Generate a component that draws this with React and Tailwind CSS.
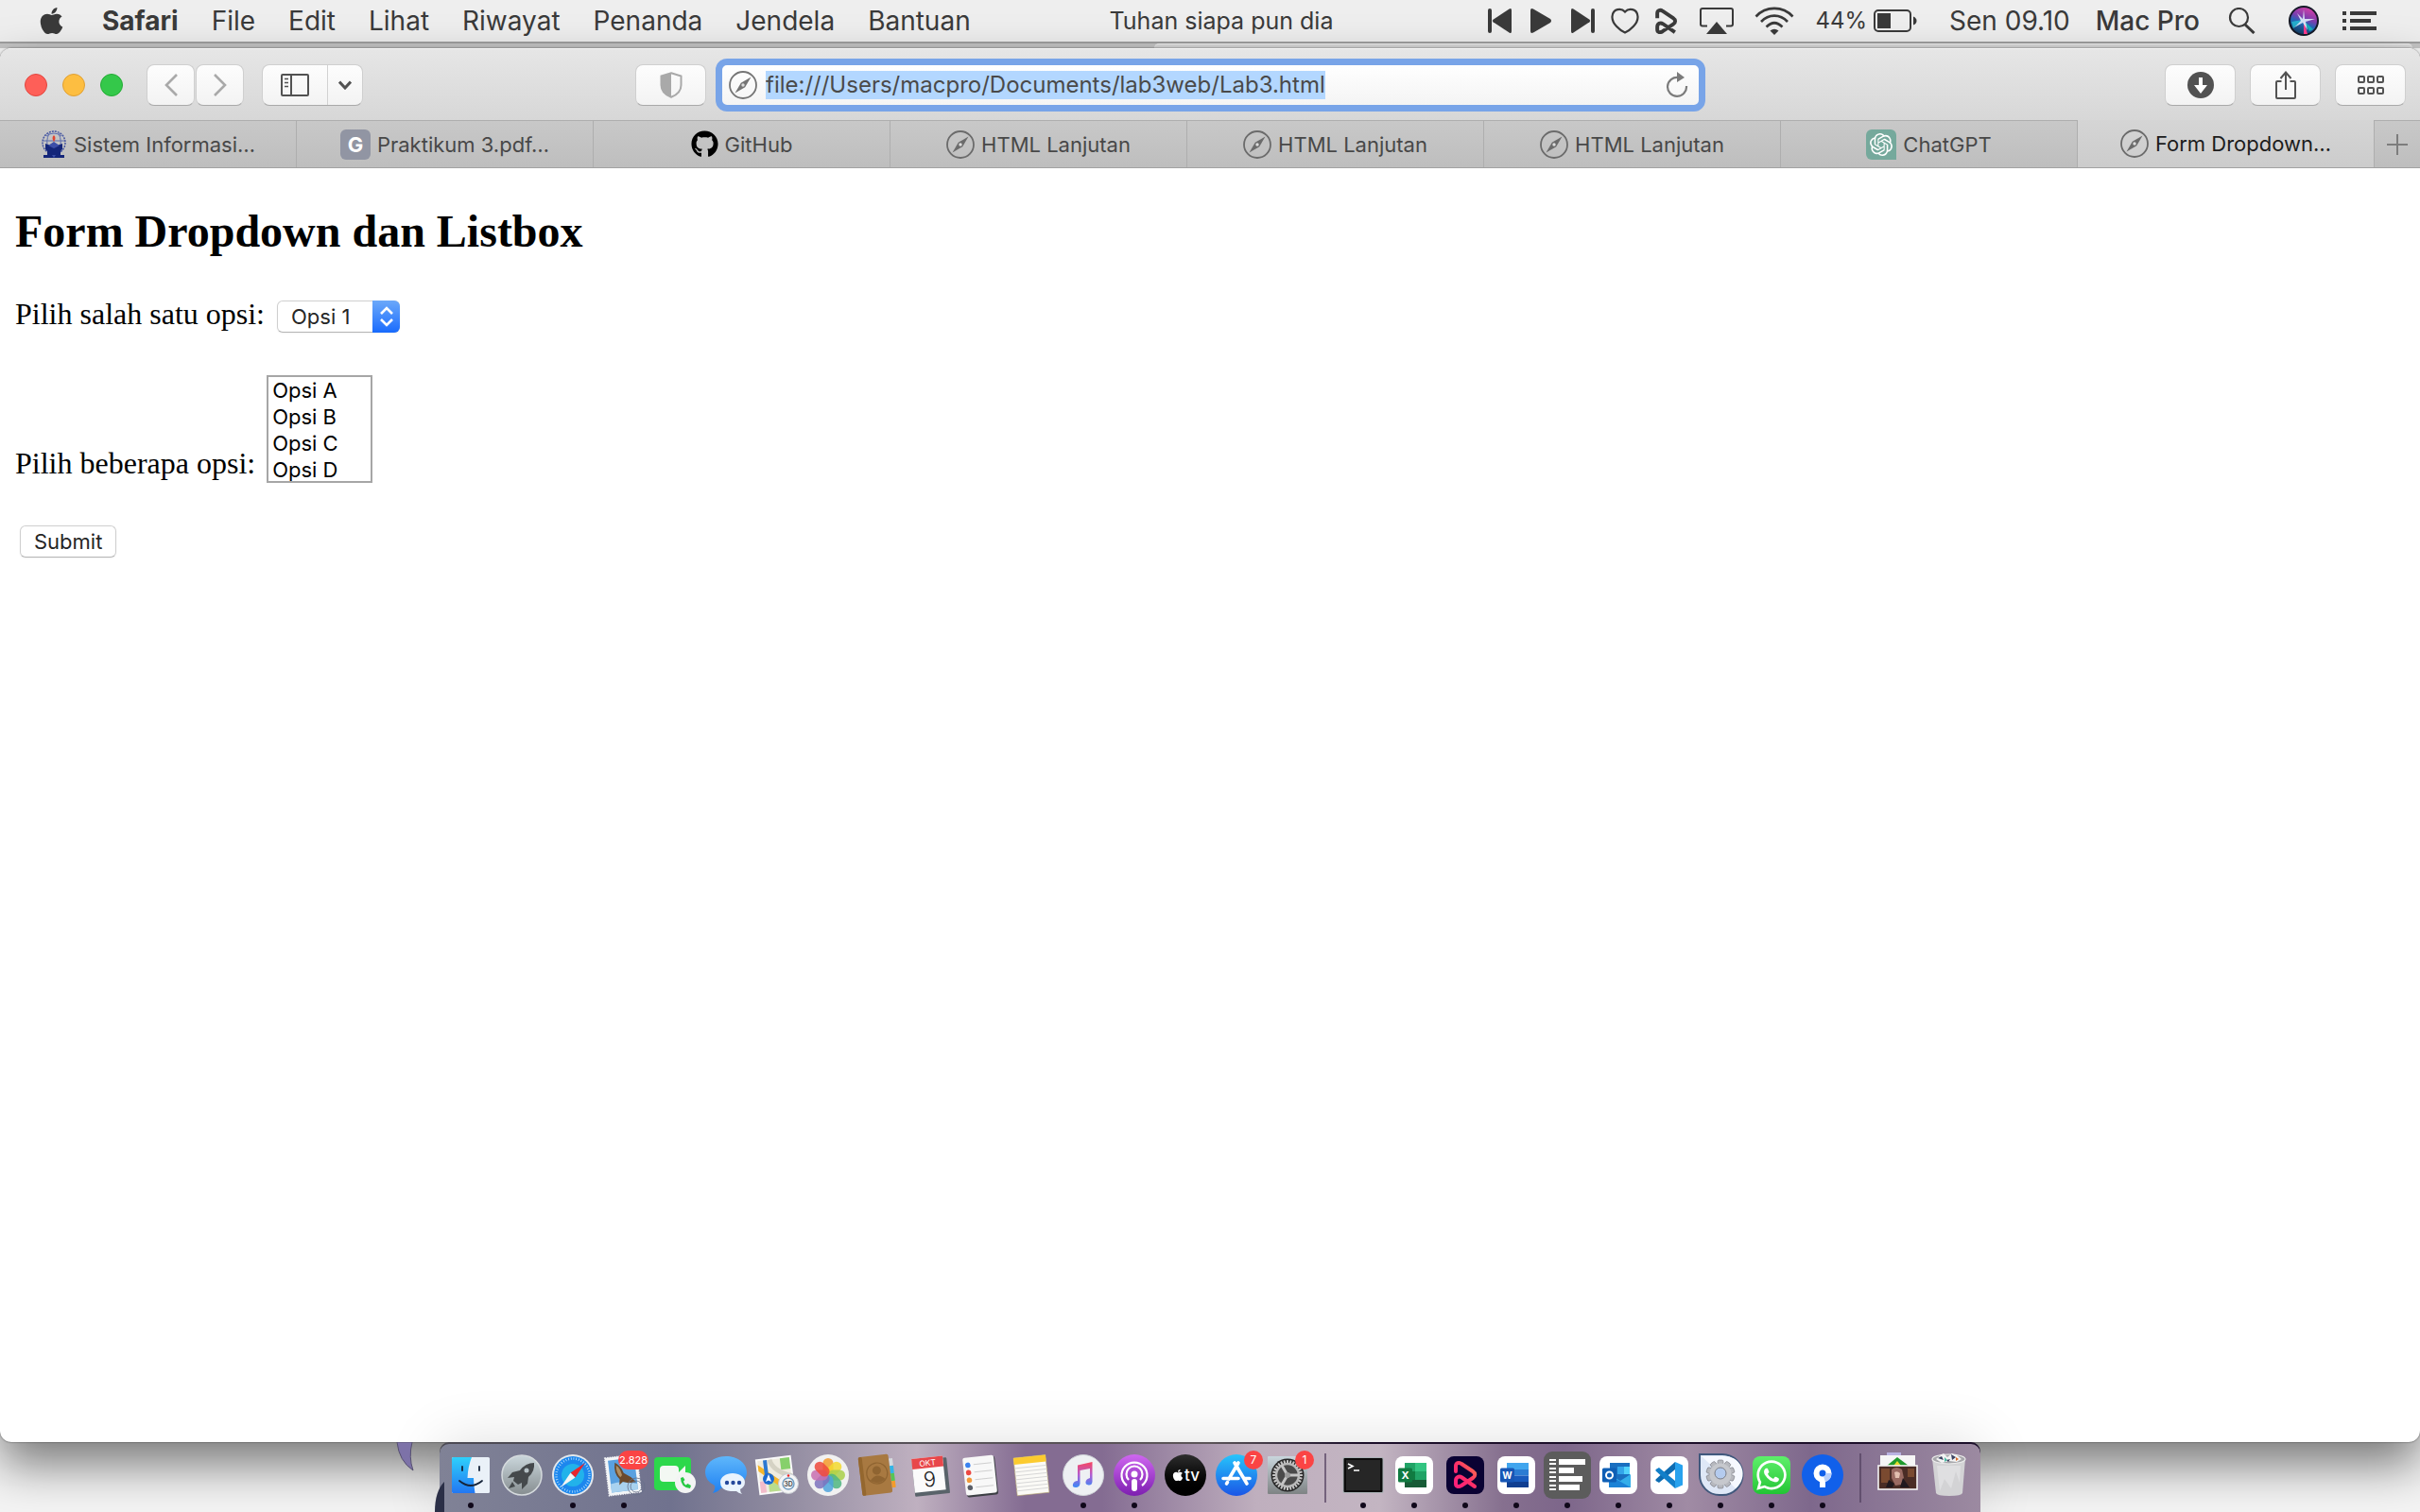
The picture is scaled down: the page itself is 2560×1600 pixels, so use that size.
import React from "react";
import { FaApple, FaGithub, FaWhatsapp } from "react-icons/fa";
import { SiOpenai } from "react-icons/si";

const MENUS = ["File", "Edit", "Lihat", "Riwayat", "Penanda", "Jendela", "Bantuan"];

const RESSO_PATH = "M3 12V6.500C3 3 6.500 2 9 4L21 12C24 14 24 17 21 19L9 27C5.500 29 3 28 3 25V22C3 18 6.500 16.500 9.500 18.500L23 28";

function Compass({ className = "size-[30px]", color = "#6b6b6b" }) {
  return (
    <svg viewBox="0 0 30 30" className={className} fill="none" aria-hidden="true">
      <circle cx="15" cy="15" r="14" stroke={color} strokeWidth="1.800" />
      <path d="M23.500 6.500 17.200 17.200 6.500 23.500 12.800 12.800Z" fill={color} />
      <circle cx="15" cy="15" r="1.700" fill="#ddd" />
    </svg>
  );
}

function MenuBar() {
  return (
    <header className="flex h-[46px] shrink-0 items-center border-b-2 border-[#9f9f9f] bg-[#eeeeee] text-[28px] leading-8 text-[#3a3a3a]">
      <nav className="flex items-center gap-[35px] pl-10" aria-label="Menu">
        <button aria-label="Apple" className="mr-1">
          <FaApple className="h-8 w-[29px]" />
        </button>
        <button className="font-bold">Safari</button>
        {MENUS.map((m) => (
          <button key={m}>{m}</button>
        ))}
      </nav>
      <div className="ml-auto flex items-center pr-[46px]">
        <span className="mr-[164px] text-[25px]">Tuhan siapa pun dia</span>
        <button aria-label="Sebelumnya" className="mr-[20px]">
          <svg viewBox="0 0 25 28" className="h-7 w-[25px]" fill="currentColor">
            <rect x="0" y="1" width="4" height="26" rx="2" />
            <path d="M22.500 1.500Q25 0 25 3V25Q25 28 22.500 26.500L5.500 15.300Q4 14 5.500 12.700Z" />
          </svg>
        </button>
        <button aria-label="Putar" className="mr-[20px]">
          <svg viewBox="0 0 23 28" className="h-7 w-[23px]" fill="currentColor">
            <path d="M3 1.400Q0 0 0 3V25Q0 28 3 26.600L21 16Q23 14 21 12Z" />
          </svg>
        </button>
        <button aria-label="Berikutnya" className="mr-[17px]">
          <svg viewBox="0 0 25 28" className="h-7 w-[25px]" fill="currentColor">
            <rect x="21" y="1" width="4" height="26" rx="2" />
            <path d="M2.500 1.500Q0 0 0 3V25Q0 28 2.500 26.500L19.500 15.300Q21 14 19.500 12.700Z" />
          </svg>
        </button>
        <button aria-label="Suka" className="mr-[16px]">
          <svg viewBox="0 0 30 28" className="h-7 w-[30px]" fill="none" stroke="currentColor" strokeWidth="2.200">
            <path d="M15 4.500C11 0 2 1 1.500 9.500 1 17 10 24.500 15 26.500 20 24.500 29 17 28.500 9.500 28 1 19 0 15 4.500Z" />
          </svg>
        </button>
        <button aria-label="Resso" className="mr-[23px]">
          <svg viewBox="0 0 26 30" className="h-7 w-[25px]" fill="none" stroke="currentColor" strokeWidth="4.200" strokeLinejoin="round">
            <path d={RESSO_PATH} />
          </svg>
        </button>
        <button aria-label="AirPlay" className="mr-[22px]">
          <svg viewBox="0 0 36 28" className="h-7 w-[36px]" fill="none" stroke="currentColor" strokeWidth="2">
            <path d="M8 19.500H3Q1 19.500 1 17.500V3Q1 1 3 1H33Q35 1 35 3V17.500Q35 19.500 33 19.500H28" />
            <path d="M18 15 29 28H7Z" fill="currentColor" stroke="none" />
          </svg>
        </button>
        <button aria-label="Wi-Fi" className="mr-[22px]">
          <svg viewBox="0 0 42 30" className="h-[30px] w-[42px]" fill="none" stroke="currentColor" strokeWidth="2.600">
            <path d="M1.500 10.500C12-1 30-1 40.500 10.500M7 16C15 7.500 27 7.500 35 16M12.500 21.500C18 16 24 16 29.500 21.500" />
            <path d="M16.500 25.500Q21 22 25.500 25.500L21 30Z" fill="currentColor" stroke="none" />
          </svg>
        </button>
        <span className="mr-[7px] text-2xl leading-8">44%</span>
        <svg viewBox="0 0 46 26" className="mr-[34px] h-[26px] w-[46px]" fill="none">
          <rect x="1" y="2" width="38" height="22" rx="4" stroke="#3a3a3a" strokeWidth="2" />
          <rect x="4" y="5" width="14" height="16" fill="#3a3a3a" />
          <path d="M42 8.500Q45.500 10 45.500 13T42 17.500Z" fill="#3a3a3a" />
        </svg>
        <span className="mr-[27px]">Sen 09.10</span>
        <span className="mr-[30px] font-medium">Mac Pro</span>
        <button aria-label="Cari" className="mr-[35px]">
          <svg viewBox="0 0 29 28" className="h-7 w-[29px]" fill="none" stroke="currentColor">
            <circle cx="11.500" cy="10.500" r="9.500" strokeWidth="2.200" />
            <path d="M18 18 27.500 27" strokeWidth="3" />
          </svg>
        </button>
        <button aria-label="Siri" className="mr-[25px]">
          <svg viewBox="0 0 32 32" className="size-8">
            <defs>
              <linearGradient id="siriBall" x1="0.700" y1="0" x2="0.300" y2="1">
                <stop offset="0" stopColor="#d43fa6" />
                <stop offset="0.400" stopColor="#7b3fb0" />
                <stop offset="0.600" stopColor="#2368b8" />
                <stop offset="1" stopColor="#123a5e" />
              </linearGradient>
            </defs>
            <circle cx="16" cy="16" r="16" fill="#131826" />
            <circle cx="16" cy="16" r="14" fill="url(#siriBall)" />
            <path d="M15 15 3 17 5 24Z" fill="#27c1d6" opacity="0.800" />
            <path d="M16 16 20 30 16 30Z" fill="#ff3a8c" />
            <path d="M16 16 26 25 22 27Z" fill="#12d0c0" opacity="0.700" />
            <path d="M16 4 17 14 28 14 18 17 20 26 15 18 6 23 13 16 9 8 15 14Z" fill="#e8f6ff" opacity="0.850" />
          </svg>
        </button>
        <button aria-label="Pusat Pemberitahuan">
          <svg viewBox="0 0 36 20" className="h-5 w-9" fill="currentColor">
            <path d="M0 0h4v4H0zM0 8h4v4H0zM0 16h4v4H0zM8 0h28v4H8zM8 8h22v4H8zM8 16h28v4H8z" />
          </svg>
        </button>
      </div>
    </header>
  );
}

const BTN =
  "flex h-11 items-center justify-center rounded-lg border border-[#cfcfcf] border-b-[#a9a9a9] bg-linear-to-b from-[#fdfdfd] to-[#f3f3f3] text-[#525252]";

function Toolbar() {
  return (
    <div className="flex h-[75px] items-center px-[15px]">
      <div className="flex gap-4 pl-[11px]">
        <button aria-label="Tutup" className="size-6 rounded-full border border-[#e2463f] bg-[#fe5f58]" />
        <button aria-label="Kecilkan" className="size-6 rounded-full border border-[#e0a033] bg-[#fdbe41]" />
        <button aria-label="Besarkan" className="size-6 rounded-full border border-[#24ac35] bg-[#34c84a]" />
      </div>
      <div className="ml-[25px] flex gap-px">
        <button aria-label="Kembali" className={BTN + " w-[51px]"}>
          <svg viewBox="0 0 14 24" className="h-6 w-3.5" fill="none" stroke="#a9a9a9" strokeWidth="2.600">
            <path d="M13 1 2 12 13 23" />
          </svg>
        </button>
        <button aria-label="Maju" className={BTN + " w-[51px]"}>
          <svg viewBox="0 0 14 24" className="h-6 w-3.5" fill="none" stroke="#a9a9a9" strokeWidth="2.600">
            <path d="M1 1 12 12 1 23" />
          </svg>
        </button>
      </div>
      <div className={BTN + " ml-[19px]"}>
        <button aria-label="Bar samping" className="flex h-full w-[69px] items-center justify-center border-r border-[#d2d2d2]">
          <svg viewBox="0 0 30 24" className="h-6 w-[30px]" fill="none" stroke="currentColor" strokeWidth="2">
            <rect x="1" y="1" width="28" height="22" rx="1" />
            <path d="M11 1V23" />
            <path d="M4 5.500H8M4 9.500H8M4 13.500H8" strokeWidth="1.600" />
          </svg>
        </button>
        <button aria-label="Grup tab" className="flex h-full w-[36px] items-center justify-center">
          <svg viewBox="0 0 14 10" className="h-2.5 w-3.5" fill="none" stroke="currentColor" strokeWidth="3">
            <path d="M1 1.500 7 8 13 1.500" />
          </svg>
        </button>
      </div>
      <button aria-label="Laporan privasi" className={BTN + " mr-[10px] ml-[288px] w-[75px]"}>
        <svg viewBox="0 0 24 28" className="h-7 w-6">
          <path d="M12 1.200 22.500 4.500V14C22.500 20 18 24.500 12 26.800 6 24.500 1.500 20 1.500 14V4.500Z" fill="none" stroke="#a9a9a9" strokeWidth="2" />
          <path d="M12 1V27C6 24.500 1.500 20 1.500 14V4.500Z" fill="#a9a9a9" />
        </svg>
      </button>
      <label className="flex h-14 min-w-0 flex-1 items-center rounded-xl border-[7px] border-[#78a4e8] bg-linear-to-b from-white to-[#f4f4f4] pr-[11px] pl-[7px]">
        <Compass color="#757575" />
        <input
          aria-label="Alamat"
          defaultValue="file:///Users/macpro/Documents/lab3web/Lab3.html"
          className="ml-[9px] field-sizing-content h-[30px] bg-[#b3d7ff] text-2xl leading-[30px] text-[#4a4a4a] outline-none"
        />
        <button aria-label="Muat ulang" className="ml-auto">
          <svg viewBox="0 0 24 28" className="h-7 w-6" fill="none" stroke="#7b7b7b" strokeWidth="2.200">
            <path d="M13.500 6A10 10 0 1 0 22 15" />
            <path d="M12 0 20 6 12 11Z" fill="#7b7b7b" stroke="none" />
          </svg>
        </button>
      </label>
      <div className="ml-[486px] flex gap-[15px]">
        <button aria-label="Unduhan" className={BTN + " w-[75px]"}>
          <svg viewBox="0 0 28 28" className="size-7">
            <circle cx="14" cy="14" r="14" fill="#525252" />
            <path d="M12 6H16V14H21L14 23 7 14H12Z" fill="#fff" />
          </svg>
        </button>
        <button aria-label="Bagikan" className={BTN + " w-[75px]"}>
          <svg viewBox="0 0 24 30" className="h-[30px] w-6" fill="none" stroke="currentColor" strokeWidth="2">
            <path d="M7.500 11H3Q2 11 2 12V28Q2 29 3 29H21Q22 29 22 28V12Q22 11 21 11H16.500M12 20V2M6.500 8 12 1.500 17.500 8" />
          </svg>
        </button>
        <button aria-label="Ikhtisar tab" className={BTN + " w-[75px]"}>
          <svg viewBox="0 0 28 20" className="h-5 w-7" fill="none" stroke="currentColor" strokeWidth="2">
            {[1, 11, 21].map((x) => (
              <g key={x}>
                <rect x={x} y="1" width="6" height="6" rx="1" />
                <rect x={x} y="13" width="6" height="6" rx="1" />
              </g>
            ))}
          </svg>
        </button>
      </div>
    </div>
  );
}

function CampusLogo() {
  return (
    <svg viewBox="0 0 28 30" className="h-[30px] w-7" fill="none" aria-hidden="true">
      <ellipse cx="14" cy="13" rx="12" ry="12" stroke="#4454a0" strokeWidth="1.500" strokeDasharray="2 1" />
      <path d="M6 6Q14 0 22 6M3 11H25M9 3Q5 12 8 18M19 3Q23 12 20 18" stroke="#5b6cae" />
      <path d="M14 5Q17 8 14 12 11 8 14 5Z" fill="#e2452f" />
      <path d="M5 14 14 17 23 14V20L21 22V26H25V29H3V26H7V22L5 20Z" fill="#14267a" />
      <path d="M8 16 14 12 20 16 14 19ZM12 26H16L14 29Z" fill="#3c4fa8" />
    </svg>
  );
}

const TABS = [
  { title: "Sistem Informasi…", icon: <CampusLogo /> },
  {
    title: "Praktikum 3.pdf…",
    icon: (
      <span className="flex size-8 items-center justify-center rounded-md bg-[#9195a3] text-[22px] leading-none font-bold text-white">
        G
      </span>
    ),
  },
  { title: "GitHub", icon: <FaGithub className="size-[29px] text-black" /> },
  { title: "HTML Lanjutan", icon: <Compass /> },
  { title: "HTML Lanjutan", icon: <Compass /> },
  { title: "HTML Lanjutan", icon: <Compass /> },
  {
    title: "ChatGPT",
    icon: (
      <span className="flex size-8 items-center justify-center rounded-md rounded-br-none bg-[#75a99c]">
        <SiOpenai className="size-6 text-white" />
      </span>
    ),
  },
  { title: "Form Dropdown…", icon: <Compass />, active: true },
];

function TabBar() {
  return (
    <div className="flex h-[51px] border-b border-[#a2a2a2] text-[22px] leading-7" role="tablist">
      {TABS.map((t, i) => (
        <button
          key={i}
          role="tab"
          aria-selected={!!t.active}
          className={
            "flex min-w-0 flex-1 items-center justify-center gap-[7px] border-r border-[#aeaeae] " +
            (t.active
              ? "bg-linear-to-b from-[#d5d5d5] to-[#cccccc] text-[#1c1c1c]"
              : "border-t bg-linear-to-b from-[#c8c8c8] to-[#bebebe] text-[#484848]")
          }
        >
          {t.icon}
          <span className="truncate">{t.title}</span>
        </button>
      ))}
      <button
        aria-label="Tab baru"
        className="flex w-[48px] items-center justify-center border-t border-[#aeaeae] bg-linear-to-b from-[#c8c8c8] to-[#bebebe]"
      >
        <svg viewBox="0 0 22 22" className="size-[22px]" stroke="#7d7d7d" strokeWidth="2">
          <path d="M11 0V22M0 11H22" />
        </svg>
      </button>
    </div>
  );
}

function Page() {
  return (
    <main className="px-4 pt-10 text-black">
      <h2 className="font-['Liberation_Serif',serif] text-5xl leading-[54px] font-bold">Form Dropdown dan Listbox</h2>
      <form className="mt-[42px]" onSubmit={(e) => e.preventDefault()}>
        <div className="flex items-start">
          <label htmlFor="opsi" className="font-['Liberation_Serif',serif] text-[32px] leading-[37px]">
            Pilih salah satu opsi:
          </label>
          <div className="relative mt-1 ml-[13px]">
            <select
              id="opsi"
              className="block h-[34px] w-[130px] appearance-none rounded-md border border-[#cfcfcf] border-b-[#b5b5b5] bg-white pl-[14px] text-[22px] leading-8 text-[#262626] shadow-xs"
            >
              <option>Opsi 1</option>
              <option>Opsi 2</option>
              <option>Opsi 3</option>
            </select>
            <span className="pointer-events-none absolute top-0 right-0 flex h-[34px] w-[29px] items-center justify-center rounded-r-md bg-linear-to-b from-[#6ba8f9] to-[#176afd]">
              <svg viewBox="0 0 14 22" className="h-[22px] w-3.5" fill="none" stroke="#fff" strokeWidth="2.600">
                <path d="M1 8 7 2 13 8M1 14 7 20 13 14" />
              </svg>
            </span>
          </div>
        </div>
        <div className="mt-[45px] flex items-end">
          <label htmlFor="beberapa" className="mb-0.5 font-['Liberation_Serif',serif] text-[32px] leading-[37px]">
            Pilih beberapa opsi:
          </label>
          <select
            id="beberapa"
            multiple
            size={4}
            className="ml-3 h-[114px] w-[112px] appearance-none overflow-hidden border-2 border-[#a6a6a6] bg-white pt-px text-[22px] leading-7"
          >
            {["Opsi A", "Opsi B", "Opsi C", "Opsi D"].map((o) => (
              <option key={o} className="h-7 px-1 py-0 leading-7">
                {o}
              </option>
            ))}
          </select>
        </div>
        <button
          type="submit"
          className="mt-[45px] ml-[5px] h-[34px] rounded-md border border-[#cfcfcf] border-b-[#b5b5b5] bg-white px-[14px] text-[22px] leading-8 text-[#262626] shadow-xs"
        >
          Submit
        </button>
      </form>
    </main>
  );
}

function Badge({ children, wide }) {
  return (
    <span
      className={
        "absolute -top-1 flex h-5 items-center justify-center rounded-full bg-[#fb4444] text-white " +
        (wide ? "-right-1 w-8 text-[11px]" : "-right-1.5 w-5 text-xs")
      }
    >
      {children}
    </span>
  );
}

function Svg({ children }) {
  return (
    <svg viewBox="0 0 44 44" className="size-11 overflow-visible" aria-hidden="true">
      {children}
    </svg>
  );
}

const gear = (cx, cy, r, n) =>
  Array.from({ length: n }, (_, i) => (
    <rect key={i} x={cx - 1} y={cy - r - 2} width="2" height="5" rx="0.500" transform={`rotate(${(360 / n) * i} ${cx} ${cy})`} />
  ));

const PETALS = ["#f49b2c", "#f3d92e", "#a9d04a", "#4fb680", "#4fa3dc", "#7d72bd", "#c86fb0", "#ee4a3c"];

const APPS = [
  {
    name: "Finder",
    dot: true,
    art: (
      <Svg>
        <defs>
          <linearGradient id="finder" x2="0" y2="1">
            <stop stopColor="#2ed0fb" />
            <stop offset="1" stopColor="#2277f2" />
          </linearGradient>
        </defs>
        <rect x="2" y="3" width="40" height="38" rx="1.500" fill="#eaf1f8" />
        <path d="M3.500 3H23Q19 13 18.500 25H25Q25 33 26.500 41H3.500Q2 41 2 39.500V4.500Q2 3 3.500 3Z" fill="url(#finder)" />
        <path d="M13 13V17M31 13V17M10 28Q22 38 34 28" fill="none" stroke="#16243a" strokeWidth="1.800" strokeLinecap="round" />
      </Svg>
    ),
  },
  {
    name: "Launchpad",
    art: (
      <Svg>
        <defs>
          <linearGradient id="launch" x2="0" y2="1">
            <stop stopColor="#cbd7dc" />
            <stop offset="1" stopColor="#868d90" />
          </linearGradient>
        </defs>
        <circle cx="22" cy="22" r="21" fill="url(#launch)" stroke="#d5dadd" strokeWidth="1.500" />
        <path d="M35 9Q26 9 20 17L12 19 7 25 14 24 13 28 18 32 22 30 22 37 28 31 29 24Q36 18 35 9Z" fill="#45494c" />
        <path d="M12 29 8 36 15 34Z" fill="#45494c" />
        <circle cx="27" cy="17" r="2.500" fill="#b5c0c5" />
      </Svg>
    ),
  },
  {
    name: "Safari",
    dot: true,
    art: (
      <Svg>
        <circle cx="22" cy="22" r="22" fill="#e4e8ec" />
        <circle cx="22" cy="22" r="20" fill="#1c87ee" />
        <circle cx="22" cy="22" r="12" fill="#22b2ea" />
        <circle cx="22" cy="22" r="17.500" fill="none" stroke="#b9defa" strokeWidth="2.500" strokeDasharray="0.800 1.950" />
        <path d="M35 9 24.500 24.500 19.500 19.500Z" fill="#e8262d" />
        <path d="M9 35 19.500 19.500 24.500 24.500Z" fill="#f4f4f4" />
      </Svg>
    ),
  },
  {
    name: "Mail",
    dot: true,
    badge: "2.828",
    wide: true,
    art: (
      <Svg>
        <g transform="rotate(-7 20 22)">
          <rect x="4" y="2" width="34" height="40" fill="#f3f5f7" stroke="#f3f5f7" strokeWidth="1.500" strokeDasharray="1.500 1" />
          <rect x="7" y="5" width="28" height="34" fill="#5aa1e0" />
          <path d="M7 30Q20 27 35 33V39H7Z" fill="#a9d2ef" />
          <path d="M14 8Q20 12 22 20L29 25 34 31 26 31 20 29 16 32 17 26Q11 19 14 8Z" fill="#6b4a2c" />
          <path d="M15 11Q19 14 20 22L18 24Q14 19 15 11Z" fill="#b08f63" />
        </g>
        <circle cx="35" cy="34" r="9" fill="none" stroke="#66708a" strokeWidth="1" opacity="0.800" />
        <circle cx="35" cy="34" r="6" fill="none" stroke="#66708a" strokeWidth="1" opacity="0.800" />
      </Svg>
    ),
  },
  {
    name: "FaceTime",
    art: (
      <Svg>
        <rect x="0" y="3" width="39" height="35" rx="4" fill="#2cd84b" />
        <rect x="6" y="12" width="20" height="17" rx="4" fill="#f3f8f3" />
        <path d="M26 19 33 12V28L26 22Z" fill="#f3f8f3" />
        <circle cx="33" cy="30" r="11" fill="#f3f4f4" />
        <path d="M28 25Q28 35 38 36L39 33 35.500 31 33.500 32.500Q31.500 31 31 28.500L32.500 27 30.500 24Z" fill="#27c944" />
      </Svg>
    ),
  },
  {
    name: "Pesan",
    art: (
      <Svg>
        <defs>
          <linearGradient id="msg" x2="0" y2="1">
            <stop stopColor="#5fb7fb" />
            <stop offset="1" stopColor="#1e80f2" />
          </linearGradient>
        </defs>
        <path d="M22 2C34 2 44 9 44 19S34 36 22 36Q19 36 17 35.500 13 40 8 41 11 37 10 33 0 28 0 19C0 9 10 2 22 2Z" fill="url(#msg)" />
        <path d="M29 20C36 20 42 24 42 29.500Q42 34 37 37 37 40 39 42 35 41 33 39 16 40 16 29.500C16 24 22 20 29 20Z" fill="#e9f3fd" />
        <circle cx="23" cy="30" r="2.200" fill="#24489c" />
        <circle cx="29.500" cy="30" r="2.200" fill="#24489c" />
        <circle cx="36" cy="30" r="2.200" fill="#24489c" />
      </Svg>
    ),
  },
  {
    name: "Peta",
    art: (
      <Svg>
        <g transform="rotate(-7 20 22)">
          <rect x="2" y="4" width="36" height="36" fill="#efece0" stroke="#fafafa" strokeWidth="2" />
          <rect x="27" y="5" width="10" height="12" fill="#86d06b" />
          <rect x="12" y="28" width="12" height="11" fill="#b9dd8e" />
          <rect x="3" y="27" width="6" height="12" fill="#f3bccb" />
          <path d="M3 16 23 34 27 30 3 9Z" fill="#f5b62b" />
          <path d="M16 5Q18 18 38 25" fill="none" stroke="#d5d2c4" strokeWidth="5" />
          <rect x="9" y="5" width="4" height="20" fill="#2b78d2" />
        </g>
        <circle cx="13" cy="26" r="6" fill="#1c6ad0" />
        <path d="M13 21 16 29 13 27.500 10 29Z" fill="#fff" />
        <circle cx="34" cy="31" r="10.500" fill="#f4f5f6" stroke="#c8ccd2" />
        <circle cx="34" cy="31" r="6" fill="none" stroke="#6f9cc0" strokeWidth="1.400" />
        <text x="34" y="33.500" textAnchor="middle" fontSize="7" fontWeight="700" fill="#555">
          3D
        </text>
        <circle cx="34" cy="22.500" r="1.300" fill="#e22" />
      </Svg>
    ),
  },
  {
    name: "Foto",
    art: (
      <Svg>
        <circle cx="22" cy="22" r="22" fill="#f1f1f1" />
        {PETALS.map((c, i) => (
          <rect key={c} x="16.500" y="4" width="11" height="18" rx="5.500" fill={c} opacity="0.850" transform={`rotate(${45 * i} 22 22)`} />
        ))}
      </Svg>
    ),
  },
  {
    name: "Kontak",
    art: (
      <Svg>
        <g transform="rotate(-7 20 22)">
          <path d="M34 6H38V14H34Z" fill="#d5dade" />
          <path d="M34 14H38V22H34Z" fill="#32b5e6" />
          <path d="M34 22H38V30H34Z" fill="#56c554" />
          <path d="M34 30H38V37H34Z" fill="#f39c2b" />
          <rect x="2" y="1" width="32" height="41" rx="2" fill="#a87941" />
          <rect x="2" y="1" width="4" height="41" rx="1.500" fill="#94672f" />
          <circle cx="20" cy="20" r="11" fill="none" stroke="#8f6431" strokeWidth="1.200" />
          <circle cx="20" cy="17" r="4.500" fill="#8f6431" />
          <path d="M12 27Q20 18 28 27 20 33 12 27Z" fill="#8f6431" />
        </g>
      </Svg>
    ),
  },
  {
    name: "Kalender",
    art: (
      <Svg>
        <g transform="rotate(-6 22 22)">
          <rect x="4" y="5" width="37" height="38" rx="1" fill="#59636a" />
          <rect x="4" y="3" width="33" height="36" fill="#fbfbfb" />
          <rect x="4" y="3" width="33" height="11" fill="#e8474a" />
          <text x="20.500" y="11.800" textAnchor="middle" fontSize="8.500" fill="#fff">
            OKT
          </text>
          <text x="21" y="34" textAnchor="middle" fontSize="22" fontWeight="300" fill="#222">
            9
          </text>
        </g>
      </Svg>
    ),
  },
  {
    name: "Pengingat",
    art: (
      <Svg>
        <g transform="rotate(-6 22 22)">
          <rect x="5" y="3" width="33" height="41" rx="2.500" fill="#3c3f44" />
          <rect x="4" y="2" width="33" height="40" rx="2.500" fill="#f8f8f8" />
          <path d="M15 10H34M15 18H34M15 26H34M15 34H34" stroke="#cfcfcf" />
          <circle cx="9" cy="10" r="2.800" fill="#3b82f0" />
          <circle cx="9" cy="18" r="2.800" fill="#ec4742" />
          <circle cx="9" cy="26" r="2.800" fill="#f1993a" />
          <circle cx="9" cy="34" r="2.800" fill="#5b5f68" />
        </g>
      </Svg>
    ),
  },
  {
    name: "Catatan",
    art: (
      <Svg>
        <g transform="rotate(-6 22 22)">
          <rect x="4" y="2" width="34" height="40" fill="#fbfaf6" stroke="#b7a76f" strokeWidth="0.600" />
          <rect x="4" y="2" width="34" height="7" fill="#fccb2f" />
          <path d="M4 13H38M4 17H38M4 21H38M4 25H38M4 29H38M4 33H38M4 37H38" stroke="#d5d5d5" strokeWidth="0.900" />
        </g>
      </Svg>
    ),
  },
  {
    name: "Musik",
    dot: true,
    art: (
      <Svg>
        <defs>
          <linearGradient id="note" x2="0" y2="1">
            <stop stopColor="#f8455f" />
            <stop offset="0.500" stopColor="#b35bd0" />
            <stop offset="1" stopColor="#3b8af7" />
          </linearGradient>
        </defs>
        <circle cx="22" cy="22" r="21.500" fill="#eef0f3" stroke="#cfd3d8" />
        <path d="M16 11.500 31.500 8V29Q31 33 27.500 32.500T24.500 29 29 25V15L18.500 17V31Q18 35 14 35T11 31.500 16 28Z" fill="url(#note)" />
      </Svg>
    ),
  },
  {
    name: "Podcast",
    dot: true,
    art: (
      <Svg>
        <defs>
          <linearGradient id="pod" x2="0" y2="1">
            <stop stopColor="#cf67f0" />
            <stop offset="1" stopColor="#7d1fb0" />
          </linearGradient>
        </defs>
        <circle cx="22" cy="22" r="22" fill="url(#pod)" />
        <path d="M14 33A13.500 13.500 0 1 1 30 33M16 27A8.500 8.500 0 1 1 28 27" fill="none" stroke="#fff" strokeWidth="2.200" />
        <circle cx="22" cy="21" r="3.500" fill="#fff" />
        <rect x="19" y="26" width="6" height="13" rx="3" fill="#fff" />
      </Svg>
    ),
  },
  {
    name: "TV",
    art: (
      <span className="flex size-11 items-center justify-center rounded-full bg-linear-to-b from-[#2e2e2e] to-black text-[17px] leading-none font-medium text-white">
        <FaApple className="size-[14px]" />
        tv
      </span>
    ),
  },
  {
    name: "App Store",
    badge: "7",
    art: (
      <Svg>
        <defs>
          <linearGradient id="store" x2="0" y2="1">
            <stop stopColor="#26c5fb" />
            <stop offset="1" stopColor="#1b55e6" />
          </linearGradient>
        </defs>
        <circle cx="22" cy="22" r="22" fill="url(#store)" />
        <path d="M24 9 14 26M20 9 33 31M8 25.500H24M31 25.500H36M12.500 29.500 11.500 31" stroke="#fff" strokeWidth="3.600" strokeLinecap="round" />
      </Svg>
    ),
  },
  {
    name: "Preferensi Sistem",
    badge: "1",
    art: (
      <Svg>
        <defs>
          <linearGradient id="prefs" x2="0" y2="1">
            <stop stopColor="#c9d6dd" />
            <stop offset="1" stopColor="#7e8384" />
          </linearGradient>
        </defs>
        <rect x="1" y="2" width="42" height="40" rx="1" fill="url(#prefs)" />
        <circle cx="22" cy="22" r="17.500" fill="#262626" />
        <g fill="#c4c4c4">{gear(22, 22, 14, 28)}</g>
        <circle cx="22" cy="22" r="12" fill="#4a4a4a" stroke="#b9b9b9" strokeWidth="2.500" />
        <path d="M22 22 15.500 11M22 22H34M22 22 15.500 33" stroke="#c4c4c4" strokeWidth="3" />
        <circle cx="22" cy="22" r="3" fill="#9a9a9a" />
      </Svg>
    ),
  },
  { sep: true, name: "sep1" },
  {
    name: "Terminal",
    dot: true,
    art: (
      <Svg>
        <rect x="0.500" y="3" width="43" height="38" rx="1.500" fill="#a9b1b5" />
        <rect x="1.500" y="4" width="41" height="36" rx="1" fill="#0c0c0c" />
        <rect x="4" y="6" width="36" height="32" fill="#262626" />
        <path d="M6 10 11 12.500 6 15M12 17H18" fill="none" stroke="#fff" strokeWidth="1.600" />
      </Svg>
    ),
  },
  {
    name: "Excel",
    dot: true,
    art: (
      <Svg>
        <rect x="2" y="2" width="40" height="40" rx="8" fill="#fff" />
        <rect x="12" y="9" width="11" height="26" fill="#21a366" />
        <rect x="23" y="9" width="12" height="9" fill="#33c481" />
        <rect x="12" y="18" width="11" height="9" fill="#107c41" />
        <rect x="23" y="18" width="12" height="9" fill="#21a366" />
        <rect x="12" y="27" width="23" height="8" fill="#185c37" />
        <rect x="5" y="14.500" width="15" height="15" rx="1.500" fill="#117a41" />
        <text x="12.500" y="26" textAnchor="middle" fontSize="11" fontWeight="700" fill="#fff">
          X
        </text>
      </Svg>
    ),
  },
  {
    name: "Resso",
    dot: true,
    art: (
      <Svg>
        <defs>
          <linearGradient id="resso" x1="1" y1="0" x2="0" y2="1">
            <stop stopColor="#ff7a4a" />
            <stop offset="0.500" stopColor="#ff2f68" />
            <stop offset="1" stopColor="#ff1f7a" />
          </linearGradient>
        </defs>
        <rect x="2" y="2" width="40" height="40" rx="8" fill="#0a0233" />
        <g transform="translate(9 6)">
          <path d={RESSO_PATH} fill="none" stroke="url(#resso)" strokeWidth="4" strokeLinejoin="round" strokeLinecap="round" />
        </g>
      </Svg>
    ),
  },
  {
    name: "Word",
    dot: true,
    art: (
      <Svg>
        <rect x="2" y="2" width="40" height="40" rx="8" fill="#fff" />
        <rect x="12" y="9" width="23" height="7" fill="#41a5ee" />
        <rect x="12" y="16" width="23" height="6.500" fill="#2b7cd3" />
        <rect x="12" y="22.500" width="23" height="6.500" fill="#185abd" />
        <rect x="12" y="29" width="23" height="6" fill="#103f91" />
        <rect x="5" y="14.500" width="15" height="15" rx="1.500" fill="#1756b5" />
        <text x="12.500" y="26" textAnchor="middle" fontSize="10" fontWeight="700" fill="#fff">
          W
        </text>
      </Svg>
    ),
  },
  {
    name: "Daftar",
    dot: true,
    art: (
      <Svg>
        <rect x="-3" y="-3" width="50" height="50" rx="9" fill="#5c5c5c" />
        <path d="M13 5H41V11H13zM13 14H29V20H13zM13 23H38V29H13zM13 32H35V38H13zM3 5H10V7H3zM3 9H10V11H3zM3 14H10V16H3zM3 18H10V20H3zM3 23H10V25H3zM3 27H10V29H3zM3 32H10V34H3zM3 36H10V38H3z" fill="#fff" />
      </Svg>
    ),
  },
  {
    name: "Outlook",
    dot: true,
    art: (
      <Svg>
        <rect x="2" y="2" width="40" height="40" rx="8" fill="#fff" />
        <rect x="13" y="9" width="21" height="20" fill="#1a6fc0" />
        <rect x="21" y="13" width="7" height="8" fill="#33a5ea" />
        <rect x="28" y="13" width="6" height="8" fill="#51d2fb" />
        <path d="M12 21 24 28 35 21V35H12Z" fill="#33aeea" />
        <path d="M12 22 35 35H12Z" fill="#1b82d6" />
        <rect x="5" y="14.500" width="15" height="15" rx="1.500" fill="#0f5fb5" />
        <circle cx="12.500" cy="22" r="3.500" fill="none" stroke="#fff" strokeWidth="2" />
      </Svg>
    ),
  },
  {
    name: "Visual Studio Code",
    dot: true,
    art: (
      <Svg>
        <rect x="2" y="2" width="40" height="40" rx="8" fill="#fff" />
        <path d="M28 8 36 11.500V32.500L28 36Z" fill="#27a2ee" />
        <path d="M28 8V16L11 30 7.500 28V26.500Z" fill="#0d6cb2" />
        <path d="M28 36V28L11 14 7.500 16V17.500Z" fill="#127fc9" />
      </Svg>
    ),
  },
  {
    name: "Alat",
    dot: true,
    art: (
      <Svg>
        <path d="M0 0H24A21.500 21.500 0 0 1 24 43H21A21 21 0 0 1 0 22Z" fill="#dfe8f7" stroke="#40587c" strokeWidth="2" />
        <path d="M2 2 38 36A19 19 0 0 0 24 2Z" fill="#f6f9ff" />
        <g fill="#b6b8be" stroke="#75777e" strokeWidth="0.600">
          {Array.from({ length: 10 }, (_, i) => (
            <rect key={i} x="19" y="6" width="6" height="8" rx="1.500" transform={`rotate(${36 * i} 22 21)`} />
          ))}
        </g>
        <circle cx="22" cy="21" r="11.500" fill="#c6c8cd" />
        <circle cx="22" cy="20" r="6" fill="#b4cbee" stroke="#7b7f8a" />
      </Svg>
    ),
  },
  {
    name: "WhatsApp",
    dot: true,
    art: (
      <span className="m-0.5 flex size-10 items-center justify-center rounded-lg bg-linear-to-b from-[#5df06a] to-[#20c534]">
        <FaWhatsapp className="size-9 text-white" />
      </span>
    ),
  },
  {
    name: "Sourcetree",
    dot: true,
    art: (
      <Svg>
        <circle cx="22" cy="22" r="22" fill="#1160ea" />
        <circle cx="22" cy="20" r="6.500" fill="none" stroke="#fff" strokeWidth="6" />
        <rect x="19" y="27" width="6" height="8" fill="#fff" />
        <path d="M28.500 20A6.500 6.500 0 0 1 24 26.300" fill="none" stroke="#b8cffb" strokeWidth="6" />
      </Svg>
    ),
  },
  { sep: true, name: "sep2" },
  {
    name: "Unduhan",
    art: (
      <Svg>
        <rect x="10" y="-2" width="15" height="6" fill="#b9b3e2" />
        <rect x="3" y="1" width="37" height="20" fill="#f6f6f6" />
        <path d="M21 3 33 12H10Z" fill="#1f9a2d" />
        <path d="M21 7 25 12H17Z" fill="#e5dc2f" />
        <rect x="1" y="12" width="41" height="25" fill="#4a2c25" stroke="#f4f4f4" strokeWidth="1.600" />
        <path d="M4 15H13V30H4ZM32 15H39V24H32Z" fill="#7a4a30" />
        <path d="M15 16Q20 12 26 16L28 25 25 32 19 33 15 25Z" fill="#9a6a62" />
        <path d="M18 19Q21 17 24 20L23 25 19 25Z" fill="#e3bfb0" />
        <path d="M12 27 18 31 16 35H9ZM27 25 34 35H24Z" fill="#20181e" />
      </Svg>
    ),
  },
  {
    name: "Tong Sampah",
    art: (
      <Svg>
        <path d="M4 4 8 41Q9 44 22 44T36 41L39 4Z" fill="#d3d3d5" />
        <path d="M9 12 12 39 17 26 24 36 29 18 33 30 34 12Z" fill="#dfdfe1" />
        <ellipse cx="21.500" cy="5" rx="17.500" ry="5" fill="#a8a8ac" stroke="#ececec" strokeWidth="1.200" />
        <path d="M8 5 13 1 16-1 20 3 25-1 30 1 35 5 30 8 22 7 14 9Z" fill="#f3f3f3" />
        <path d="M10 4 14 2 16 6ZM24 0 29 3 25 6ZM19 6 23 5 21 8Z" fill="#3b4260" />
        <path d="M17 3 20 6 17 8Z" fill="#47b9a2" />
        <path d="M29 3 32 5 29 7Z" fill="#d86a2a" />
      </Svg>
    ),
  },
];

function Dock() {
  return (
    <footer className="relative z-20 flex h-[74px] shrink-0 justify-center">
      <svg viewBox="0 0 60 74" className="absolute top-0 left-[410px] h-[74px] w-[60px]" aria-hidden="true">
        <path d="M10 0H26Q22 16 27 30Q12 20 10 0Z" fill="#7d72a8" stroke="#56506f" />
        <path d="M60 42Q50 52 50 74H60Z" fill="#2b2f47" />
      </svg>
      <div className="rounded-t-[10px] bg-linear-to-r from-[#4c4a54] via-[#5c5558] via-50% to-[#1c0f2a] to-60% pt-0.5 shadow-[0_0_60px_rgba(0,0,0,0.13)]">
        <nav
          aria-label="Dock"
          className="flex h-[72px] rounded-t-[10px] bg-[linear-gradient(90deg,#808296_0%,#70728e_15%,#8f8a9f_22%,#bfb0c0_31%,#846c92_38%,#846c92_43%,#bfafbe_53%,#c3b5c2_61%,#86708f_69%,#7d668a_73%,#a08ba4_81%,#7e688c_89%,#9c8aa1_100%)] px-1.5"
        >
          {APPS.map((a) =>
            a.sep ? (
              <div key={a.name} className="flex w-[26px] justify-center pt-[10px]">
                <div className="h-[52px] w-0.5 bg-[#52405f]/70" />
              </div>
            ) : (
              <button key={a.name} aria-label={a.name} className="flex w-[54px] flex-col items-center pt-[11px]">
                <span className="relative">
                  {a.art}
                  {a.badge && <Badge wide={a.wide}>{a.badge}</Badge>}
                </span>
                {a.dot && <span className="mt-[7px] size-1.5 rounded-full bg-[#10081a]" />}
              </button>
            )
          )}
        </nav>
      </div>
    </footer>
  );
}

export default function App() {
  return (
    <div className="flex h-screen flex-col overflow-hidden bg-[#f4f4f4] font-[Inter,sans-serif]">
      <MenuBar />
      <div className="flex h-[5px] shrink-0 justify-end bg-[#c4c4c4]">
        <div className="mr-2 w-[52%] rounded-tl-lg rounded-tr-lg border-t border-[#eee] bg-[#d9d9d9]" />
      </div>
      <div className="relative z-10 flex flex-1 flex-col overflow-hidden rounded-xl bg-white shadow-[0_24px_50px_rgba(0,0,0,0.5),0_0_2px_rgba(0,0,0,0.6)]">
        <div className="border-t border-[#f6f6f6] bg-linear-to-b from-[#e6e6e6] to-[#cdcdcd]">
          <Toolbar />
          <TabBar />
        </div>
        <Page />
      </div>
      <Dock />
    </div>
  );
}
